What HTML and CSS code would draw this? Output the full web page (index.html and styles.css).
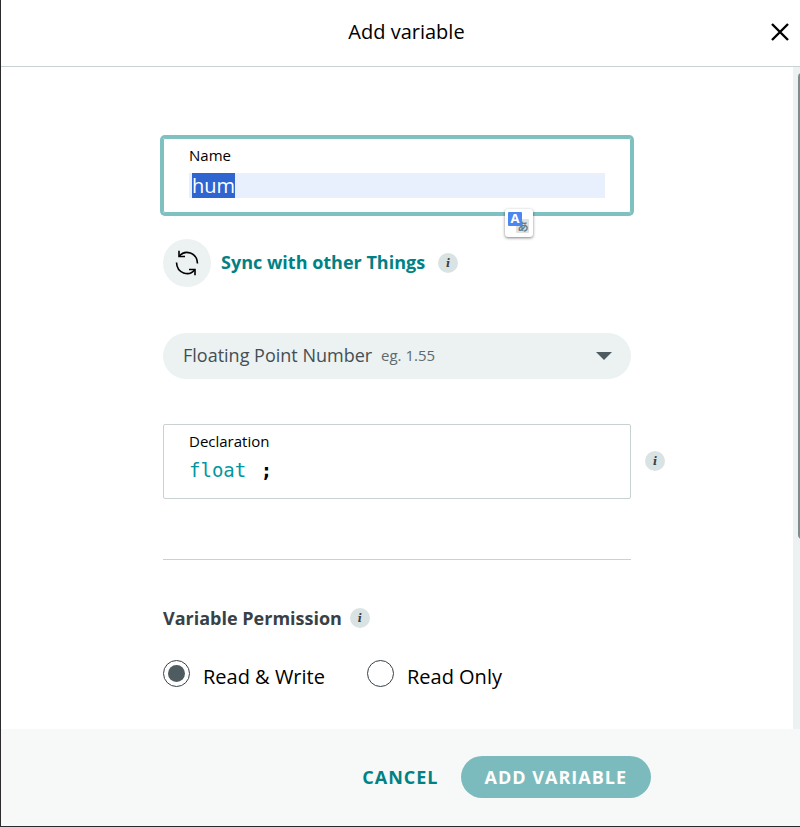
FILE: index.html
```html
<!DOCTYPE html>
<html lang="en">
<head>
	<meta charset="utf-8">
	<meta name="viewport" content="width=device-width, initial-scale=1">
	<title>Add variable</title>
	<link rel="stylesheet" href="styles.css">
</head>
<body>
	<div class="dialog" role="dialog" aria-labelledby="dialogTitle">
		<header class="dialog-header">
			<h1 id="dialogTitle" class="dialog-title">Add variable</h1>
			<button class="btn-close" type="button" aria-label="Close">
				<svg width="18" height="18" viewBox="0 0 18 18"><path d="M1 1L17 17M17 1L1 17" fill="none" stroke="#000" stroke-width="2.4"/></svg>
			</button>
		</header>
		<div class="dialog-body">
			<form id="variableForm" class="form">
				<div class="field field-active">
					<label class="field-label" for="varName">Name</label>
					<input id="varName" class="field-input" type="text" name="name" value="hum" autocomplete="off" spellcheck="false">
					<div class="translate">
						<svg class="translate-icon" width="22" height="22" viewBox="0 0 22 22">
							<rect x="8" y="7" width="13" height="14" rx="1" fill="#e0e0e0"/>
							<text class="translate-b" x="15" y="19" text-anchor="middle">あ</text>
							<rect x="0" y="0" width="14" height="14" rx="1" fill="#4a87f0"/>
							<text class="translate-a" x="7" y="11" text-anchor="middle">A</text>
						</svg>
					</div>
				</div>
				<div class="sync">
					<button class="btn-sync" type="button">
						<span class="sync-circle">
							<svg width="26" height="26" viewBox="0 0 26 26" fill="none" stroke="#000" stroke-width="1.6">
								<path d="M5.500 6C11 -.8 23 2.500 23.500 13.500"/>
								<path d="M5 .8V6.500H11"/>
								<path d="M20.500 20C15 26.800 3 23.500 2.500 12.500"/>
								<path d="M21 25.200V19.500H15"/>
							</svg>
						</span>
						<span class="sync-text">Sync with other Things</span>
					</button>
					<span class="info">i</span>
				</div>
				<div class="picker">
					<select class="picker-select" name="type" aria-label="Variable type">
						<option selected>Floating Point Number</option>
					</select>
					<span class="picker-hint">eg. 1.55</span>
					<svg class="picker-arrow" width="16" height="8" viewBox="0 0 16 8"><path d="M0 0H16L8 8Z" fill="#4e5b61"/></svg>
				</div>
				<div class="field">
					<div class="field-label">Declaration</div>
					<code class="declaration"><span class="type">float</span> <b class="semicolon">;</b></code>
					<span class="info info-outside">i</span>
				</div>
				<hr class="divider">
				<fieldset class="permission">
					<legend class="permission-title">Variable Permission <span class="info">i</span></legend>
					<div class="radios">
						<label class="radio"><input type="radio" name="permission" value="rw" checked><span>Read &amp; Write</span></label>
						<label class="radio"><input type="radio" name="permission" value="r"><span>Read Only</span></label>
					</div>
				</fieldset>
			</form>
			<div class="scrollbar"><div class="scrollbar-thumb"></div></div>
		</div>
		<footer class="dialog-footer">
			<button class="btn btn-text" type="button">CANCEL</button>
			<button class="btn btn-primary" type="submit" form="variableForm">ADD VARIABLE</button>
		</footer>
	</div>
	<script>
		var varName = document.querySelector('#varName');
		varName.focus();
		varName.select();
	</script>
</body>
</html>
```
FILE: styles.css
```css
* {
	box-sizing: border-box;
}
body {
	margin: 0;
	font-family: "Open Sans", "Noto Sans", sans-serif;
	font-size: 20px;
	color: #000;
	background-color: #fff;
}
button, input, select {
	font-family: inherit;
}
button {
	border: 0 none;
	padding: 0;
	background: none;
	cursor: pointer;
}
svg {
	display: block;
}
.dialog {
	display: flex;
	flex-direction: column;
	min-height: 100vh;
	border-left: 1px solid #2b2b2e;
	border-bottom: 1px solid #2b2b2e;
	overflow: hidden;
}
.dialog-header {
	display: grid;
	grid-template-columns: 41px 1fr 29px;
	align-items: center;
	height: 67px;
	padding-bottom: 3px;
	border-bottom: 1px solid #c9d2d2;
}
.dialog-title {
	grid-column: 2;
	margin: 0;
	font-size: 20px;
	font-weight: normal;
	line-height: 28px;
	text-align: center;
}
.dialog-body {
	flex: 1;
	display: flex;
	justify-content: space-between;
}
.form {
	width: 468px;
	margin: 0 auto;
	padding: 71px 0 36px;
}
.scrollbar {
	width: 7px;
	padding: 6px 0 0 5px;
	background-color: #ecf1f1;
}
.scrollbar-thumb {
	width: 8px;
	height: 71%;
	border-radius: 4px;
	background-color: #7f8c8d;
}

/* boxed fields */
.field {
	position: relative;
	height: 75px;
	padding: 6px 25px;
	border: 1px solid #c9d2d2;
	border-radius: 2px;
}
.field-active {
	border-color: #7fc0c0;
	box-shadow: 0 0 0 3px #7fc0c0;
}
.field-label {
	display: block;
	font-size: 15px;
	line-height: 20px;
}
.field-input {
	display: block;
	width: 100%;
	height: 25px;
	margin-top: 8px;
	padding: 1px 3px;
	border: 0 none;
	outline: none;
	font-size: 20px;
	line-height: 23px;
	background-color: #e8effd;
}
.field-input::selection {
	color: #fff;
	background-color: #2f65d0;
}
.translate {
	position: absolute;
	right: 97px;
	bottom: -25px;
	width: 28px;
	height: 28px;
	padding: 3px;
	border-radius: 3px;
	background-color: #fff;
	box-shadow: 0 1px 3px rgba(0,0,0, 0.5);
}
.translate-icon {
	overflow: visible;
}
.translate-a {
	font-size: 13px;
	font-weight: bold;
	fill: #fff;
}
.translate-b {
	font-family: "Noto Sans CJK JP", sans-serif;
	font-size: 11px;
	font-weight: bold;
	fill: #607d8b;
}
.declaration {
	display: block;
	margin-top: 5px;
	font-family: "DejaVu Sans Mono", monospace;
	font-size: 19px;
	line-height: 28px;
}
.type {
	color: #00979d;
}
.semicolon {
	margin-left: 3px;
}

.info {
	display: inline-block;
	width: 20px;
	height: 20px;
	border-radius: 50%;
	font-family: "DejaVu Serif", serif;
	font-size: 11px;
	font-style: italic;
	font-weight: bold;
	line-height: 21px;
	text-align: center;
	color: #374146;
	background-color: #dae3e3;
}
.info-outside {
	position: absolute;
	top: 26px;
	right: -35px;
}

.sync {
	display: flex;
	align-items: center;
	gap: 13px;
	margin: 26px 0 46px;
}
.btn-sync {
	display: flex;
	align-items: center;
	gap: 10px;
	font-size: 18px;
	font-weight: bold;
	color: #008184;
}
.sync-text {
	padding-bottom: 2px;
}
.sync-circle {
	display: flex;
	align-items: center;
	justify-content: center;
	width: 48px;
	height: 48px;
	border-radius: 50%;
	background-color: #ecf1f1;
}

.picker {
	position: relative;
	margin-bottom: 45px;
}
.picker-select {
	display: block;
	appearance: none;
	width: 100%;
	height: 46px;
	padding: 0 20px 2px;
	border: 0 none;
	border-radius: 23px;
	font-size: 18px;
	color: #434f54;
	background-color: #ecf1f1;
}
.picker-hint {
	position: absolute;
	top: 12px;
	left: 218px;
	font-size: 15px;
	line-height: 20px;
	color: #5d6a6f;
	pointer-events: none;
}
.picker-arrow {
	position: absolute;
	top: 19px;
	right: 19px;
	pointer-events: none;
}

.divider {
	margin: 60px 0 44px;
	border: 0 none;
	border-top: 1px solid #c9d2d2;
}
.permission {
	margin: 0;
	padding: 0;
	border: 0 none;
}
.permission-title {
	display: flex;
	align-items: center;
	gap: 8px;
	padding: 0;
	font-size: 18px;
	font-weight: bold;
	line-height: 28px;
	color: #374146;
}
.radios {
	display: flex;
	gap: 42px;
	margin-top: 28px;
}
.radio {
	display: flex;
	align-items: flex-start;
	gap: 13px;
	line-height: 28px;
}
.radio > span {
	margin-top: 3px;
}
.radio > input {
	appearance: none;
	width: 27px;
	height: 27px;
	margin: 0;
	padding: 4px;
	border: 1px solid #374146;
	border-radius: 50%;
}
.radio > input:checked {
	background-color: #4e5b61;
	background-clip: content-box;
}

.dialog-footer {
	display: flex;
	align-items: center;
	justify-content: flex-end;
	gap: 22px;
	height: 97px;
	padding: 0 149px 2px 0;
	background-color: #f7f9f9;
}
.btn {
	height: 42px;
	font-size: 18px;
	font-weight: bold;
	letter-spacing: 1px;
}
.btn-text {
	color: #008184;
}
.btn-primary {
	padding: 0 24px;
	border-radius: 21px;
	color: #fff;
	background-color: #7cbbbd;
}
```
